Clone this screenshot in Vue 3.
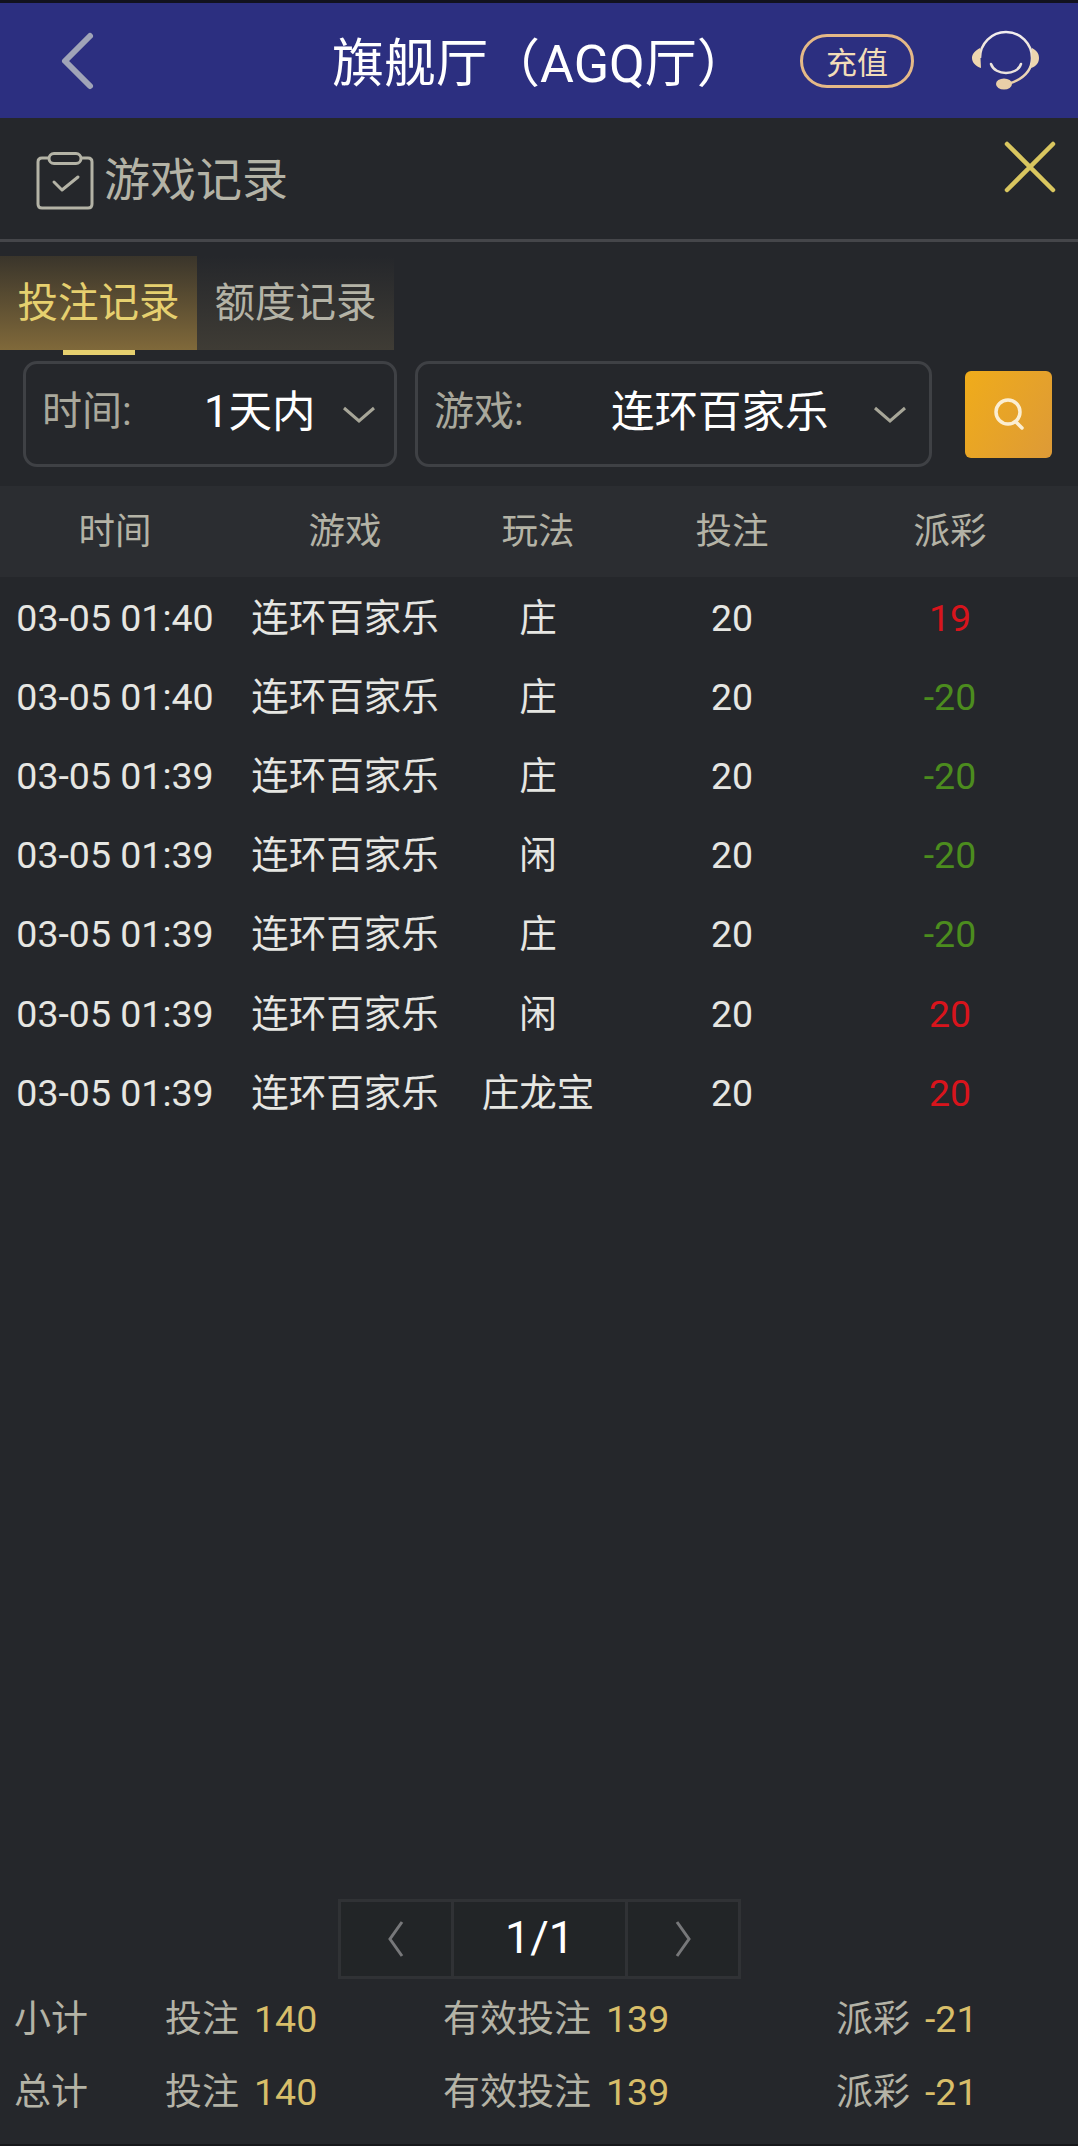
<template>
  <div class="page">
    <header class="topbar">
      <button class="back">
        <svg width="38" height="60" viewBox="0 0 38 60"><path d="M30 5 L5 30 L30 55" fill="none" stroke="#a0a4b8" stroke-width="6" stroke-linecap="round" stroke-linejoin="round" /></svg>
      </button>
      <h1 class="hall">旗舰厅（AGQ厅）</h1>
      <div class="recharge">充值</div>
      <svg class="headset" width="68" height="62" viewBox="0 0 68 62">
        <defs>
          <linearGradient id="hs" x1="0" y1="0" x2="0" y2="1">
            <stop offset="0" stop-color="#f2eef0" />
            <stop offset="1" stop-color="#e9cfa8" />
          </linearGradient>
        </defs>
        <path d="M8 28 A26 26 0 0 1 60 28 C60 40 52 49 36 54" fill="none" stroke="url(#hs)" stroke-width="2.5" />
        <path d="M8 18 C2 21 0 25 0 28 C0 32 3 36 9 38 Z M60 18 C66 21 67 25 67 28 C67 32 65 36 59 38 Z" fill="#eed6af" />
        <path d="M19 34 C23 46 45 46 49 34" fill="none" stroke="#ebe3dd" stroke-width="2.5" stroke-linecap="round" />
        <ellipse cx="32" cy="54" rx="8" ry="5.5" fill="#e9cfa8" />
      </svg>
    </header>

    <section class="panel">
      <div class="title-row">
        <svg class="clip" width="58" height="58" viewBox="0 0 58 58">
          <path d="M13 6 H6 Q2 6 2 10 V52 Q2 56 6 56 H52 Q56 56 56 52 V10 Q56 6 52 6 H45" fill="none" stroke="#b4b3a6" stroke-width="3" />
          <rect x="13" y="1.5" width="32" height="10" rx="5" fill="none" stroke="#b4b3a6" stroke-width="3" />
          <path d="M18 30 L26 38 L42 25" fill="none" stroke="#b4b3a6" stroke-width="3" stroke-linecap="round" stroke-linejoin="round" />
        </svg>
        <span class="title">游戏记录</span>
        <svg class="close" width="52" height="52" viewBox="0 0 52 52">
          <path d="M3 3 L49 49 M49 3 L3 49" stroke="#d9c65f" stroke-width="4.5" stroke-linecap="round" />
        </svg>
      </div>

      <div class="tabs">
        <div class="tab active">投注记录</div>
        <div class="tab">额度记录</div>
      </div>

      <div class="filters">
        <div class="select time">
          <span class="sel-label">时间:</span>
          <span class="sel-value">1天内</span>
          <svg class="chev" width="34" height="18" viewBox="0 0 34 18"><path d="M2 2 L17 15 L32 2" fill="none" stroke="#a7a698" stroke-width="3" /></svg>
        </div>
        <div class="select game">
          <span class="sel-label">游戏:</span>
          <span class="sel-value">连环百家乐</span>
          <svg class="chev" width="34" height="18" viewBox="0 0 34 18"><path d="M2 2 L17 15 L32 2" fill="none" stroke="#a7a698" stroke-width="3" /></svg>
        </div>
        <button class="search">
          <svg width="34" height="36" viewBox="0 0 34 36"><circle cx="16" cy="16" r="12" fill="none" stroke="#fbeed2" stroke-width="3.5" /><path d="M24 26 L30 32" stroke="#fbeed2" stroke-width="3.5" stroke-linecap="round" /></svg>
        </button>
      </div>

      <div class="grid head">
        <span v-for="h in heads" :key="h">{{ h }}</span>
      </div>
      <div class="rows">
        <div v-for="(r, i) in rows" :key="i" class="grid row">
          <span class="num">{{ r.time }}</span>
          <span class="cjk">连环百家乐</span>
          <span class="cjk">{{ r.play }}</span>
          <span class="num">20</span>
          <span class="num" :class="r.win > 0 ? 'win' : 'lose'">{{ r.win }}</span>
        </div>
      </div>

      <div class="pager">
        <div class="pg-btn">
          <svg width="18" height="36" viewBox="0 0 18 36"><path d="M15 1 L3 18 L15 35" fill="none" stroke="#77787a" stroke-width="3" /></svg>
        </div>
        <div class="pg-num">1/1</div>
        <div class="pg-btn">
          <svg width="18" height="36" viewBox="0 0 18 36"><path d="M3 1 L15 18 L3 35" fill="none" stroke="#77787a" stroke-width="3" /></svg>
        </div>
      </div>

      <div class="totals">
        <div v-for="t in totals" :key="t" class="total">
          <span>{{ t }}</span>
          <span>投注<b>140</b></span>
          <span>有效投注<b>139</b></span>
          <span>派彩<b>-21</b></span>
        </div>
      </div>
    </section>
  </div>
</template>

<script setup>
const heads = ['时间', '游戏', '玩法', '投注', '派彩']
const totals = ['小计', '总计']
const rows = [
  { time: '03-05 01:40', play: '庄', win: 19 },
  { time: '03-05 01:40', play: '庄', win: -20 },
  { time: '03-05 01:39', play: '庄', win: -20 },
  { time: '03-05 01:39', play: '闲', win: -20 },
  { time: '03-05 01:39', play: '庄', win: -20 },
  { time: '03-05 01:39', play: '闲', win: 20 },
  { time: '03-05 01:39', play: '庄龙宝', win: 20 },
]
</script>

<style>
html, body { background: #25272b; }
</style>

<style scoped>
.page {
  width: 1078px;
  height: 2146px;
  display: flex;
  flex-direction: column;
  overflow: hidden;
  background: #25272b;
  border-top: 3px solid #12121e;
  border-bottom: 2px solid #17181b;
  box-sizing: border-box;
  font-family: Roboto, "Noto Sans CJK SC", sans-serif;
  color: #b4b3a6;
}
.topbar {
  height: 115px;
  flex: none;
  display: flex;
  align-items: center;
  background: #2c2f80;
}
.back {
  width: 60px;
  margin-left: 60px;
  padding: 0;
  background: none;
  border: none;
  line-height: 0;
  text-align: left;
}
.hall {
  margin: 0 0 2px 212px;
  width: 468px;
  flex: none;
  font-size: 52px;
  font-weight: 400;
  color: #fff;
  white-space: nowrap;
}
.recharge {
  width: 114px;
  height: 54px;
  box-sizing: border-box;
  border: 3px solid #e5b987;
  border-radius: 28px;
  display: flex;
  align-items: center;
  justify-content: center;
  font-size: 31px;
  color: #f2ddb8;
}
.headset { margin-left: 58px; }
.panel {
  flex: 1;
  min-height: 0;
  display: flex;
  flex-direction: column;
}
.title-row {
  position: relative;
  height: 124px;
  flex: none;
  display: flex;
  align-items: center;
  padding: 4px 0 0 36px;
  box-sizing: border-box;
  border-bottom: 3px solid #45464a;
}
.title {
  margin: 0 0 10px 10px;
  font-size: 46px;
  color: #b4b3a6;
}
.close {
  position: absolute;
  right: 22px;
  top: 23px;
}
.tabs {
  display: flex;
  margin-top: 14px;
  flex: none;
}
.tab {
  position: relative;
  width: 197px;
  height: 94px;
  display: flex;
  align-items: center;
  justify-content: center;
  padding-bottom: 8px;
  box-sizing: border-box;
  font-size: 40.5px;
  background: linear-gradient(180deg, #25272b 0%, #3f3c35 100%);
}
.tab.active {
  color: #e6d06f;
  background: linear-gradient(180deg, #3a352b 0%, #80693a 100%);
}
.tab.active::after {
  content: "";
  position: absolute;
  left: 63px;
  bottom: -5px;
  width: 72px;
  height: 5px;
  background: #e6d06f;
}
.filters {
  display: flex;
  align-items: center;
  margin-top: 11px;
  padding-left: 23px;
  flex: none;
}
.select {
  height: 106px;
  box-sizing: border-box;
  border: 3px solid #3f4145;
  border-radius: 14px;
  display: flex;
  align-items: center;
  padding-bottom: 12px;
}
.select.time { width: 374px; padding-left: 16px; }
.select.game { width: 517px; padding-left: 16px; margin-left: 18px; }
.sel-label { font-size: 40px; color: #a9a89c; width: 92px; flex: none; white-space: nowrap; }
.sel-value { font-size: 43.5px; color: #fff; white-space: nowrap; }
.time .sel-value { margin-left: 70px; }
.game .sel-value { margin-left: 85px; }
.chev { margin-left: auto; margin-right: 18px; margin-top: 14px; }
.game .chev { margin-right: 22px; }
.search {
  margin-left: 33px;
  width: 87px;
  height: 87px;
  padding: 0;
  border: none;
  border-radius: 6px;
  background: linear-gradient(120deg, #f0ac1a, #dd9a37);
  line-height: 0;
}
.grid {
  display: grid;
  grid-template-columns: 230px 230px 156px 232px 204px;
  align-items: center;
  justify-items: center;
  white-space: nowrap;
}
.head {
  margin-top: 19px;
  height: 91px;
  flex: none;
  font-size: 36.5px;
  background: #2b2d31;
  padding-bottom: 7px;
  box-sizing: border-box;
}
.rows { flex: 1; min-height: 0; }
.row {
  height: 79.2px;
  font-size: 37.5px;
  color: #e6e6e2;
}
.num { padding-top: 2px; }
.cjk { padding-bottom: 5px; }
.win { color: #d8141c; }
.lose { color: #4c8c1e; }
.pager {
  align-self: center;
  flex: none;
  display: flex;
  height: 80px;
  box-sizing: border-box;
  border: 3px solid #303235;
  background: #222527;
  margin-left: 1px;
}
.pg-btn {
  width: 110px;
  display: flex;
  align-items: center;
  justify-content: center;
}
.pg-num {
  width: 177px;
  display: flex;
  align-items: center;
  justify-content: center;
  border-left: 3px solid #303235;
  border-right: 3px solid #303235;
  font-size: 45px;
  padding-bottom: 4px;
  box-sizing: border-box;
  color: #fff;
}
.totals {
  flex: none;
  padding: 0 0 18px 14px;
}
.total {
  height: 73.5px;
  display: grid;
  grid-template-columns: 151px 278px 393px 1fr;
  align-items: center;
  font-size: 37px;
  white-space: nowrap;
}
.total b {
  margin-left: 15px;
  font-weight: 400;
  font-size: 37.5px;
  color: #d8be69;
}
</style>
